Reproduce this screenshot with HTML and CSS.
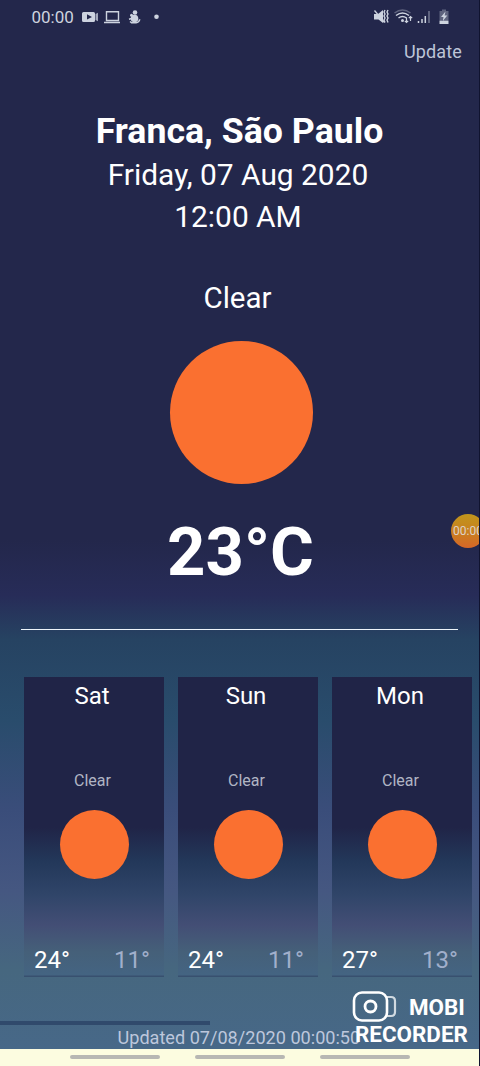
FILE: index.html
```html
<!DOCTYPE html>
<html lang="en">
<head>
<meta charset="utf-8">
<title>Weather</title>
<link rel="stylesheet" href="styles.css">
</head>
<body>
<div class="screen">
  <header class="status">
    <span class="clock">00:00</span>
    <svg class="left-icons" width="82" height="18" viewBox="0 0 82 18">
      <path fill="currentColor" fill-rule="evenodd" d="M1.500 4h10q1.500 0 1.500 1.500v7q0 1.500-1.500 1.500h-10Q0 14 0 12.500v-7Q0 4 1.500 4zM5 6.200v5.400l5-2.700z"/>
      <path fill="currentColor" opacity=".75" d="M13.500 6l2.500-1.300v8.600L13.500 12z"/>
      <path fill="none" stroke="currentColor" stroke-width="1.400" d="M24.500 3.800h12v8.700h-12zM22 14.500h16"/>
      <circle cx="53" cy="4.500" r="2.300" fill="currentColor"/>
      <circle cx="52.500" cy="10.500" r="3.800" fill="currentColor"/>
      <circle cx="49.500" cy="7.300" r="1.500" fill="currentColor"/>
      <path fill="none" stroke="currentColor" stroke-width="1.500" d="M49.500 10.500l-2.500.8M48 13.500l1.500 1.200h4.500q3.500-.5 3.700-3.500"/>
      <circle cx="74.500" cy="8.800" r="2.300" fill="currentColor"/>
    </svg>
    <svg class="right-icons" width="78" height="18" viewBox="0 0 78 18">
      <path fill="currentColor" d="M1 6h4l5-4v13l-4.500-3.500H1z"/>
      <path fill="none" stroke="currentColor" stroke-width="1.300" d="M1.500 2.500l10 12"/>
      <path fill="none" stroke="currentColor" stroke-width="1.400" d="M12 2l-1 2 1 2-1 2 1 2-1 2 1 2.500M15 2l-1 2 1 2-1 2 1 2-1 2 1 2.500"/>
      <path class="faint" fill="none" stroke="currentColor" stroke-width="1.500" d="M21.500 5q8-6 16 0"/>
      <path fill="none" stroke="currentColor" stroke-width="1.500" d="M23 7.500q6.500-5 13 0M25.500 10q4-3 8 0"/>
      <circle cx="29.500" cy="12.500" r="1.500" fill="currentColor"/>
      <path fill="none" stroke="currentColor" stroke-width="1.200" d="M33.500 9.500v5M31.800 12.800l1.700 1.700 1.700-1.700M37.500 13V8.500M35.800 10.200l1.700-1.700 1.700 1.700"/>
      <path stroke="currentColor" stroke-width="1.500" d="M45.500 15v-2M49 15v-4M52.300 15V8"/>
      <path class="faint" stroke="currentColor" stroke-width="2" d="M56 15V3"/>
      <path class="faint" fill="currentColor" d="M66.500 3H69V1.500h4V3h2.500v9h-9z"/>
      <path fill="currentColor" d="M66.500 12.500h9V16h-9zM72.500 3.500l-4.500 5.500h2.500l-.7 4 4.500-5.500h-2.700z"/>
    </svg>
  </header>
  <div class="toolbar">Update</div>
  <main class="current">
    <h1 class="city">Franca, São Paulo</h1>
    <div class="when">Friday, 07 Aug 2020</div>
    <div class="when">12:00 AM</div>
    <div class="condition">Clear</div>
    <div class="sun"></div>
    <div class="temp">23°C</div>
  </main>
  <hr class="rule">
  <section class="days">
    <article class="day">
      <div class="name">Sat</div><div class="sky">Clear</div><div class="small-sun"></div>
      <div class="range"><span>24°</span><span class="low">11°</span></div>
    </article>
    <article class="day">
      <div class="name">Sun</div><div class="sky">Clear</div><div class="small-sun"></div>
      <div class="range"><span>24°</span><span class="low">11°</span></div>
    </article>
    <article class="day">
      <div class="name">Mon</div><div class="sky">Clear</div><div class="small-sun"></div>
      <div class="range"><span>27°</span><span class="low">13°</span></div>
    </article>
  </section>
  <div class="scrollbar"></div>
  <footer class="updated">Updated 07/08/2020 00:00:50</footer>
  <nav class="nav"><i></i><i></i><i></i></nav>
  <div class="timer"><span>00:00</span></div>
  <div class="watermark">
    <div class="mark-top">
      <svg width="45" height="32" viewBox="0 0 45 32" fill="none" stroke="#fff">
        <path class="lens-grip" stroke-width="2.200" d="M35 6h4q4 0 4 4v11q0 4-4 4h-4"/>
        <rect x="2" y="1.500" width="33" height="28" rx="8" stroke-width="2.600"/>
        <circle cx="18.500" cy="15.500" r="5.500" stroke-width="2.800"/>
      </svg>
      <span>MOBI</span>
    </div>
    <div class="mark-bottom">RECORDER</div>
  </div>
</div>
</body>
</html>
```
FILE: styles.css
```css
* { box-sizing: border-box; }
body { margin: 0; background: #23274c; }
.screen {
  position: relative;
  display: flex;
  flex-direction: column;
  width: 480px;
  height: 1066px;
  overflow: hidden;
  border-right: 1px solid #10132f;
  font-family: Roboto, "Liberation Sans", sans-serif;
  color: #fff;
  background: linear-gradient(#23274b 0, #23274b 540px, #272c58 595px, #264362 640px, #294c6c 720px, #3a4d7a 810px, #455781 890px, #46677f 970px, #476888 1049px);
}
.status { display: flex; height: 36px; padding: 8px 0 0 31px; color: #cdd3df; }
.clock { width: 51px; padding-left: .5px; font-size: 17px; line-height: 19px; }
.right-icons { margin-left: 209px; }
.faint { opacity: .35; }
.toolbar { height: 32px; padding-right: 17px; text-align: right; font-size: 18px; line-height: 32px; letter-spacing: .15px; color: #bec5d8; }
.current { display: flex; flex-direction: column; align-items: center; height: 561px; padding-top: 42px; }
.city { margin: 0; font-size: 35.700px; line-height: 43px; font-weight: 700; white-space: nowrap; }
.when { position: relative; top: .5px; padding-right: 3px; font-size: 29.900px; line-height: 42px; white-space: nowrap; }
.condition { margin-top: 41px; padding-right: 4px; font-size: 29.500px; line-height: 40px; }
.sun { width: 143px; height: 143px; margin: 23px 0 0 3px; border-radius: 50%; background: #fa7030; }
.temp { margin-top: 28px; padding-left: 2px; font-size: 67px; line-height: 81px; font-weight: 700; }
.rule { flex: none; width: 437px; height: 1px; margin: 0 0 0 21px; border: 0; background: #edf5fa; }
.days { display: flex; gap: 14px; margin: 47px 0 0 24px; }
.day {
  display: flex;
  flex: none;
  flex-direction: column;
  align-items: center;
  width: 140px;
  height: 300px;
  background: linear-gradient(#202447 0, #202447 150px, #23385a 185px, #304569 218px, #434e75 248px, #456079 275px, #446482 298px, #38506f 299px);
}
.name { padding-right: 4px; font-size: 24px; line-height: 38px; }
.sky { margin-top: 54px; padding-right: 3px; font-size: 16px; line-height: 24px; color: #b0b5c4; }
.small-sun { width: 69px; height: 69px; margin: 17px 0 0 1px; border-radius: 50%; background: #fa7030; }
.range { display: flex; justify-content: space-between; width: 100%; margin-top: 64px; padding: 0 14px 0 10px; font-size: 24px; line-height: 34px; }
.low { color: #a1afcb; }
.scrollbar { width: 210px; height: 4px; margin-top: 44px; background: #304a6c; }
.updated { height: 24px; padding-left: 117.500px; font-size: 18.100px; line-height: 26px; white-space: nowrap; color: #bdc7dc; }
.nav { display: flex; gap: 35px; flex: none; height: 17px; padding: 6px 0 0 70px; background: #fcfce0; }
.nav i { width: 90px; height: 4px; border-radius: 2px; background: #b7b7b3; }
.timer {
  position: absolute;
  left: 451px;
  top: 514px;
  width: 34px;
  height: 34px;
  border-radius: 50%;
  overflow: hidden;
  font-size: 12px;
  line-height: 34px;
  color: #ded2ca;
  background: linear-gradient(#c0961c, #cb7c20 60%, #d66628);
}
.timer span { display: block; padding-left: 2px; }
.watermark { position: absolute; left: 352px; top: 991px; font-weight: 700; font-size: 22.400px; }
.mark-top { display: flex; height: 31px; gap: 12px; align-items: center; }
.lens-grip { opacity: .75; }
.mark-bottom { padding-left: 3px; line-height: 24px; }
```
